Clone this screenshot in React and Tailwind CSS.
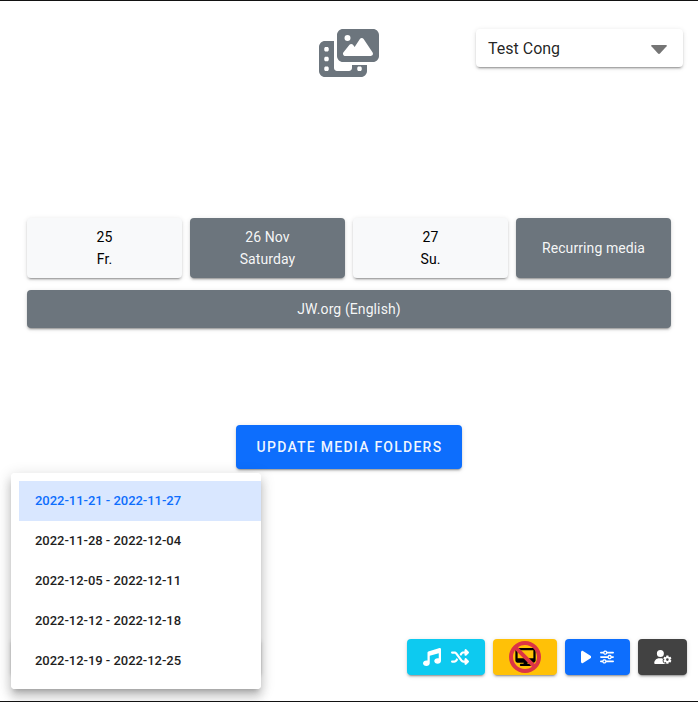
import {
  FaBan,
  FaDesktop,
  FaMusic,
  FaPhotoFilm,
  FaPlay,
  FaShuffle,
  FaSliders,
  FaUserGear,
} from 'react-icons/fa6';

const raised =
  'shadow-[0_3px_1px_-2px_rgba(0,0,0,0.2),0_2px_2px_0_rgba(0,0,0,0.14),0_1px_5px_0_rgba(0,0,0,0.12)]';

const weeks = [
  '2022-11-21 - 2022-11-27',
  '2022-11-28 - 2022-12-04',
  '2022-12-05 - 2022-12-11',
  '2022-12-12 - 2022-12-18',
  '2022-12-19 - 2022-12-25',
];

const days = [
  { lines: ['25', 'Fr.'], tone: 'bg-[#f8f9fa] text-black' },
  { lines: ['26 Nov', 'Saturday'], tone: 'bg-[#6c757d] text-white/95' },
  { lines: ['27', 'Su.'], tone: 'bg-[#f8f9fa] text-black' },
  { lines: ['Recurring media'], tone: 'bg-[#6c757d] text-white/95' },
];

function WeekMenu() {
  return (
    <ul className="absolute bottom-[-14px] left-0 h-[216px] w-[250px] overflow-hidden rounded bg-white py-2 pl-2">
      {weeks.map((week, i) => (
        <li
          key={week}
          className={`flex h-10 items-center pl-4 text-[13px] font-medium tracking-[-0.03px] ${
            i === 0 ? 'bg-[#d9e7ff] text-[#0d6efd]' : 'text-[#1e1e1e]'
          }`}
        >
          {week}
        </li>
      ))}
    </ul>
  );
}

export default function App() {
  return (
    <div className="flex h-[702px] w-[698px] flex-col overflow-hidden border-y border-y-[#121212] bg-white font-['Roboto',sans-serif] text-[14px]">
      <header className="grid h-[217px] shrink-0 grid-cols-3 items-start px-[15px] pt-7">
        <span />
        <FaPhotoFilm className="h-12 w-[60px] justify-self-center text-[#6c757d]" />
        <button
          className={`flex h-[38px] w-[207px] items-center justify-between justify-self-end rounded bg-white pt-px pr-4 pl-3 text-[16px] text-black/87 ${raised}`}
        >
          <span className="pt-px">Test Cong</span>
          <svg viewBox="0 0 16 9" className="mt-px h-[9px] w-4" fill="#757575">
            <path d="M1 0h14q1.4.2.6 1.3L9.2 8.3q-1.2 1.2-2.4 0L.4 1.3Q-.4.2 1 0z" />
          </svg>
        </button>
      </header>

      <main className="flex flex-1 flex-col px-[27px]">
        <div className="grid grid-cols-4 gap-2">
          {days.map((day) => (
            <button
              key={day.lines[0]}
              className={`flex h-[60px] flex-col items-center justify-center rounded leading-[22px] tracking-[0.1px] ${day.tone} ${raised}`}
            >
              {day.lines.map((line) => (
                <span key={line}>{line}</span>
              ))}
            </button>
          ))}
        </div>
        <button
          className={`mt-3 h-[38px] rounded bg-[#6c757d] tracking-[0.1px] text-white/95 ${raised}`}
        >
          JW.org (English)
        </button>
        <button
          className={`mt-[97px] h-11 w-[226px] self-center rounded bg-[#0d6efd] pl-px font-medium tracking-[1.25px] text-white/95 ${raised}`}
        >
          UPDATE MEDIA FOLDERS
        </button>
      </main>

      <footer className="flex h-[62px] shrink-0 items-start justify-between px-[11px]">
        <div className={`relative h-9 w-[250px] rounded ${raised}`}>
          <div className="absolute bottom-[-14px] left-0 h-[216px] w-[250px] rounded shadow-[0_5px_5px_-3px_rgba(0,0,0,0.2),0_8px_10px_1px_rgba(0,0,0,0.14),0_3px_14px_2px_rgba(0,0,0,0.12)]" />
          <WeekMenu />
        </div>
        <div className="flex gap-2 text-white">
          <button
            className={`flex h-9 w-[78px] items-center justify-center gap-[10px] rounded bg-[#0dcaf0] ${raised}`}
          >
            <FaMusic className="size-[18px]" />
            <FaShuffle className="size-[18px]" />
          </button>
          <button
            className={`grid h-9 w-16 place-items-center rounded bg-[#ffc107] ${raised}`}
          >
            <FaDesktop className="col-start-1 row-start-1 h-[18px] w-[21px] text-black" />
            <FaBan className="col-start-1 row-start-1 size-8 text-[#dc3545]" />
          </button>
          <button
            className={`flex h-9 w-[65px] items-center justify-center gap-[9px] rounded bg-[#0d6efd] ${raised}`}
          >
            <FaPlay className="h-[14px] w-[10.5px]" />
            <FaSliders className="size-[14px]" />
          </button>
          <button
            className={`flex h-9 w-[49px] items-center justify-center rounded bg-[#424242] ${raised}`}
          >
            <FaUserGear className="h-[14px] w-[18px]" />
          </button>
        </div>
      </footer>
    </div>
  );
}
